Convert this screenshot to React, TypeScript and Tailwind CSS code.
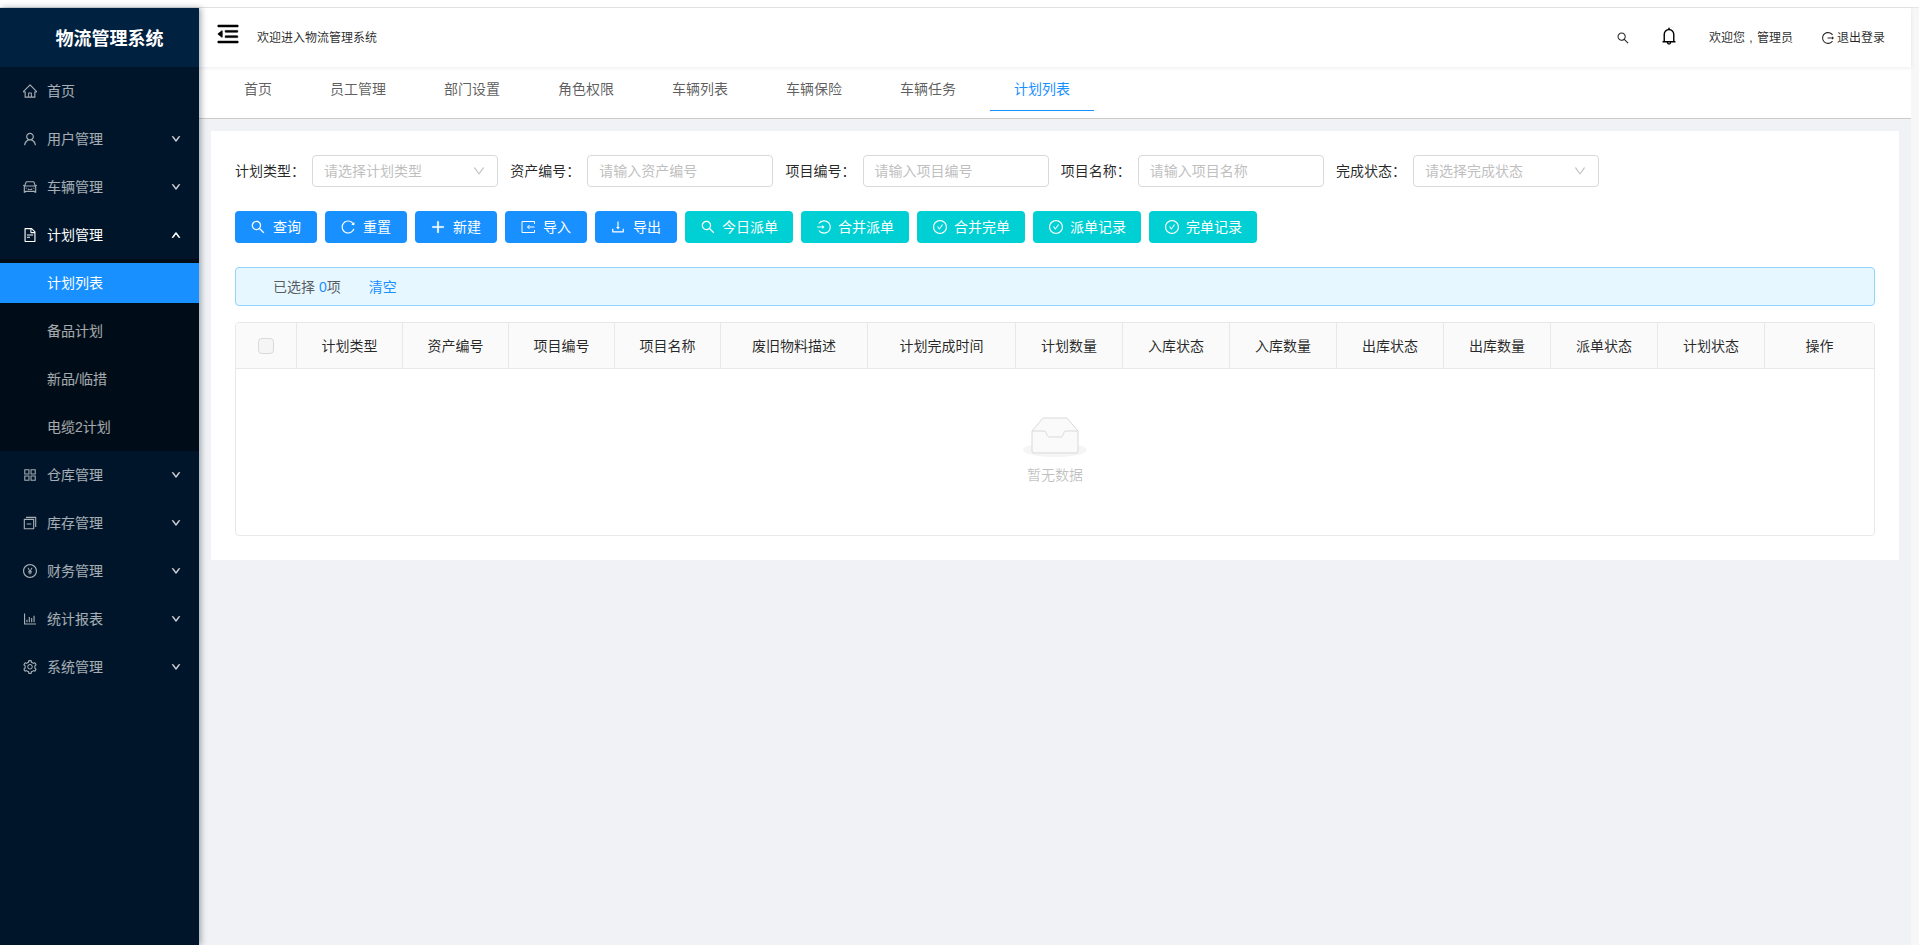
import {
  AiOutlineAppstore,
  AiOutlineBarChart,
  AiOutlineBell,
  AiOutlineCar,
  AiOutlineCheckCircle,
  AiOutlineDown,
  AiOutlineDownload,
  AiOutlineFileText,
  AiOutlineHome,
  AiOutlineLogin,
  AiOutlineLogout,
  AiOutlineMenuFold,
  AiOutlinePayCircle,
  AiOutlinePlus,
  AiOutlineReload,
  AiOutlineSearch,
  AiOutlineSetting,
  AiOutlineSwitcher,
  AiOutlineUp,
  AiOutlineUser,
} from "react-icons/ai";
import type { ComponentType } from "react";

type IconComp = ComponentType<{ className?: string }>;

const font = "font-['Liberation_Sans','Noto_Sans_CJK_SC',sans-serif]";

const ImportIcon = ({ className }: { className?: string }) => (
  <svg viewBox="0 0 16 16" fill="none" stroke="currentColor" className={className}>
    <path d="M14.500 5V2.500H2V13.500H14.500V11" />
    <path d="M14.500 8H7.500M9.500 6L7.500 8L9.500 10" />
  </svg>
);

const MenuItem = ({ icon: Icon, label, open, active, arrow = true }: { icon: IconComp; label: string; open?: boolean; active?: boolean; arrow?: boolean }) => (
  <div className={`flex h-12 items-center pl-[22px] pr-[18px] text-sm ${active ? "text-white" : "text-white/65"}`}>
    <Icon className="mr-[9px] h-4 w-4 shrink-0" />
    <span className="flex-1">{label}</span>
    {arrow && (open ? <AiOutlineUp className="h-2.5 w-2.5 stroke-[100]" /> : <AiOutlineDown className="h-2.5 w-2.5 stroke-[100]" />)}
  </div>
);

const SubItem = ({ label, active }: { label: string; active?: boolean }) => (
  <div className={`flex h-10 items-center pl-[47px] text-sm ${active ? "bg-[#1890ff] text-white" : "text-white/65"}`}>{label}</div>
);

const Sidebar = () => (
  <aside className="z-10 flex w-[199px] shrink-0 flex-col bg-[#001529] shadow-[2px_0_6px_rgba(0,21,41,0.35)]">
    <div className="flex h-[59px] items-center justify-center bg-[#002140] pl-[20px] pt-[3px] text-lg font-bold text-white">物流管理系统</div>
    <MenuItem icon={AiOutlineHome} label="首页" arrow={false} />
    <MenuItem icon={AiOutlineUser} label="用户管理" />
    <MenuItem icon={AiOutlineCar} label="车辆管理" />
    <MenuItem icon={AiOutlineFileText} label="计划管理" open active />
    <div className="flex flex-col gap-2 bg-[#000c17] py-1">
      <SubItem label="计划列表" active />
      <SubItem label="备品计划" />
      <SubItem label="新品/临措" />
      <SubItem label="电缆2计划" />
    </div>
    <MenuItem icon={AiOutlineAppstore} label="仓库管理" />
    <MenuItem icon={AiOutlineSwitcher} label="库存管理" />
    <MenuItem icon={AiOutlinePayCircle} label="财务管理" />
    <MenuItem icon={AiOutlineBarChart} label="统计报表" />
    <MenuItem icon={AiOutlineSetting} label="系统管理" />
  </aside>
);

const Header = () => (
  <header className="relative flex h-[59px] items-center bg-white pl-4 pr-[26px] pt-px text-xs text-black/85 shadow-[0_1px_4px_rgba(0,21,41,0.08)]">
    <AiOutlineMenuFold className="h-[26px] w-[26px] -translate-y-1 stroke-[24] text-black" />
    <span className="ml-4">欢迎进入物流管理系统</span>
    <div className="ml-auto flex items-center">
      <AiOutlineSearch className="h-3.5 w-3.5" />
      <AiOutlineBell className="ml-[29px] h-5 w-5 -translate-y-0.5 text-black" />
      <span className="ml-[30px]">
        欢迎您<span className="inline-block w-3 text-center">,</span>管理员
      </span>
      <AiOutlineLogout className="ml-7 mr-0.5 h-3.5 w-3.5" />
      <span>退出登录</span>
    </div>
  </header>
);

const tabs = ["首页", "员工管理", "部门设置", "角色权限", "车辆列表", "车辆保险", "车辆任务", "计划列表"];

const Tabs = () => (
  <nav className="flex h-[52px] items-start gap-2.5 border-b border-[#cccccc] bg-white pl-[21px] pt-px text-sm text-black/65">
    {tabs.map((t, i) => (
      <div key={t} className={`flex h-[43px] items-center border-b px-6 ${i === 7 ? "border-[#1890ff] text-[#1890ff]" : "border-transparent"}`}>
        {t}
      </div>
    ))}
  </nav>
);

const Field = ({ label, placeholder, select }: { label: string; placeholder: string; select?: boolean }) => (
  <div className="flex items-center">
    <label className="w-[77px] text-sm text-black/85">{label}：</label>
    <div className="flex h-8 w-[186px] items-center justify-between rounded border border-[#d9d9d9] bg-white px-[11px] text-sm text-[#bfbfbf]">
      <span>{placeholder}</span>
      {select && <AiOutlineDown className="h-3.5 w-3.5" />}
    </div>
  </div>
);

const Btn = ({ icon: Icon, label, teal, iconClass = "" }: { icon: IconComp; label: string; teal?: boolean; iconClass?: string }) => (
  <button className={`flex h-8 items-center rounded pl-[15px] text-sm text-white ${teal ? "gap-1.5 bg-[#00d0d3] pr-[15px]" : "gap-[7px] bg-[#1890ff] pr-4"}`}>
    <Icon className={`h-4 w-4 ${iconClass}`} />
    {label}
  </button>
);

const columns = ["计划类型", "资产编号", "项目编号", "项目名称", "废旧物料描述", "计划完成时间", "计划数量", "入库状态", "入库数量", "出库状态", "出库数量", "派单状态", "计划状态", "操作"];

const EmptyIcon = () => (
  <svg width="64" height="41" viewBox="0 0 64 41">
    <ellipse cx="32" cy="33" rx="32" ry="7" fill="#f5f5f5" />
    <path d="M9 14 L20 1 H44 L55 14 V34 a2 2 0 0 1 -2 2 H11 a2 2 0 0 1 -2 -2 Z" fill="#fafafa" stroke="#d9d9d9" />
    <path d="M9 14 H21 c2 0 2 2 3 4 c0.5 1 1 2 3 2 H37 c2 0 2.500 -1 3 -2 c1 -2 1 -4 3 -4 H55" fill="none" stroke="#d9d9d9" />
  </svg>
);

const Table = () => (
  <div className="mt-4 overflow-hidden rounded border border-[#e8e8e8]">
    <div className="grid h-[46px] grid-cols-[61px_106px_106px_106px_106px_147px_148px_107px_107px_107px_107px_107px_107px_107px_1fr] border-b border-[#e8e8e8] bg-[#fafafa] text-sm text-black/85">
      <div className="flex items-center justify-center border-r border-[#e8e8e8]">
        <span className="h-4 w-4 rounded-sm border border-[#d9d9d9] bg-[#f5f5f5]" />
      </div>
      {columns.map((c, i) => (
        <div key={c} className={`flex items-center justify-center ${i < columns.length - 1 ? "border-r border-[#e8e8e8]" : ""}`}>
          {c}
        </div>
      ))}
    </div>
    <div className="flex h-[166px] flex-col items-center pt-[48px] text-sm text-black/25">
      <EmptyIcon />
      <span className="mt-[7px]">暂无数据</span>
    </div>
  </div>
);

export default function App() {
  return (
    <div className={`${font} flex h-[945px] flex-col overflow-hidden bg-white`}>
      <div className="h-2 shrink-0 border-b border-[#e5e5e5] bg-white" />
      <div className="flex flex-1">
        <Sidebar />
        <div className="flex w-[1712px] shrink-0 flex-col bg-[#f0f2f5]">
          <Header />
          <Tabs />
          <main className="m-3 bg-white px-6 pb-6 pt-6">
            <div className="flex gap-[12.250px]">
              <Field label="计划类型" placeholder="请选择计划类型" select />
              <Field label="资产编号" placeholder="请输入资产编号" />
              <Field label="项目编号" placeholder="请输入项目编号" />
              <Field label="项目名称" placeholder="请输入项目名称" />
              <Field label="完成状态" placeholder="请选择完成状态" select />
            </div>
            <div className="mt-6 flex gap-2">
              <Btn icon={AiOutlineSearch} label="查询" />
              <Btn icon={AiOutlineReload} label="重置" />
              <Btn icon={AiOutlinePlus} label="新建" iconClass="stroke-[40]" />
              <Btn icon={ImportIcon} label="导入" />
              <Btn icon={AiOutlineDownload} label="导出" />
              <Btn icon={AiOutlineSearch} label="今日派单" teal />
              <Btn icon={AiOutlineLogin} label="合并派单" teal />
              <Btn icon={AiOutlineCheckCircle} label="合并完单" teal />
              <Btn icon={AiOutlineCheckCircle} label="派单记录" teal />
              <Btn icon={AiOutlineCheckCircle} label="完单记录" teal />
            </div>
            <div className="mt-6 flex h-[39px] items-center rounded border border-[#91d5ff] bg-[#e6f7ff] pl-[37px] text-sm text-black/65">
              已选择 <span className="ml-1 text-[#1890ff]">0</span>项
              <span className="ml-7 text-[#1890ff]">清空</span>
            </div>
            <Table />
          </main>
        </div>
        <div className="flex-1 bg-[#f7f7f7]" />
      </div>
    </div>
  );
}
